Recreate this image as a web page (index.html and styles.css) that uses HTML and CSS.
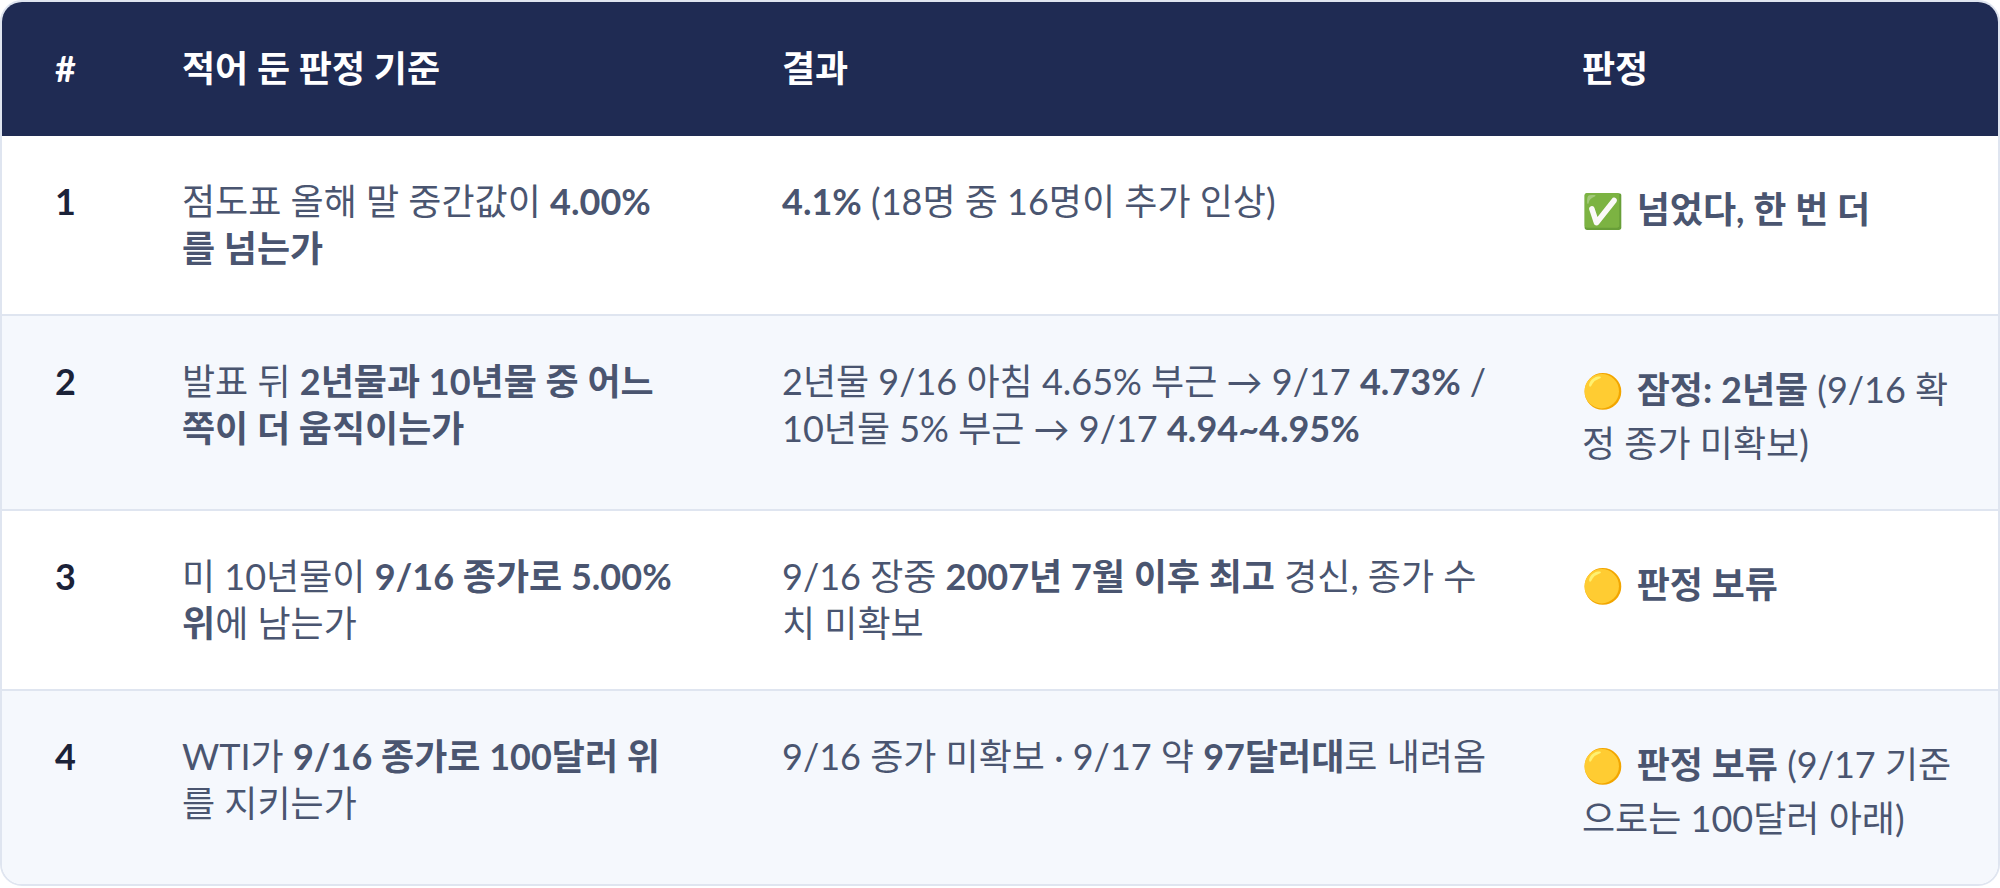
FILE: index.html
```html
<!DOCTYPE html>
<html lang="ko">
<head>
<meta charset="utf-8">
<link rel="stylesheet" href="styles.css">
</head>
<body>
<div class="wrap">
  <table class="verdict">
    <colgroup>
      <col class="c-num">
      <col class="c-crit">
      <col class="c-res">
      <col class="c-ver">
    </colgroup>
    <thead>
      <tr>
        <th class="num">#</th>
        <th class="crit">적어 둔 판정 기준</th>
        <th class="res">결과</th>
        <th class="ver">판정</th>
      </tr>
    </thead>
    <tbody>
      <tr>
        <td class="num">1</td>
        <td class="crit">점도표 올해 말 중간값이 <b>4.00%를 넘는가</b></td>
        <td class="res"><b>4.1%</b> (18명 중 16명이 추가 인상)</td>
        <td class="ver"><b><span class="emo">✅</span> 넘었다, 한 번 더</b></td>
      </tr>
      <tr class="alt">
        <td class="num">2</td>
        <td class="crit">발표 뒤 <b>2년물과 10년물 중 어느 쪽이 더 움직이는가</b></td>
        <td class="res">2년물 9/16 아침 4.65% 부근 → 9/17 <b>4.73%</b> / 10년물 5% 부근 → 9/17 <b>4.94~4.95%</b></td>
        <td class="ver"><b><span class="emo">🟡</span> 잠정: 2년물</b> (9/16 확정 종가 미확보)</td>
      </tr>
      <tr>
        <td class="num">3</td>
        <td class="crit">미 10년물이 <b>9/16 종가로 5.00% 위</b>에 남는가</td>
        <td class="res">9/16 장중 <b>2007년 7월 이후 최고</b> 경신, 종가 수치 미확보</td>
        <td class="ver"><b><span class="emo">🟡</span> 판정 보류</b></td>
      </tr>
      <tr class="alt last">
        <td class="num">4</td>
        <td class="crit">WTI가 <b>9/16 종가로 100달러 위</b>를 지키는가</td>
        <td class="res">9/16 종가 미확보 · 9/17 약 <b>97달러대</b>로 내려옴</td>
        <td class="ver"><b><span class="emo">🟡</span> 판정 보류</b> (9/17 기준으로는 100달러 아래)</td>
      </tr>
    </tbody>
  </table>
</div>
</body>
</html>
```
FILE: styles.css
```css
html, body {
  margin: 0;
  padding: 0;
  background: #ffffff;
}

.wrap {
  width: 2000px;
  box-sizing: border-box;
  border: 2px solid #dfe5f0;
  border-radius: 22px;
  overflow: hidden;
  background: #ffffff;
}

.verdict {
  width: 100%;
  table-layout: fixed;
  border-collapse: separate;
  border-spacing: 0;
  font-family: Lato, "Noto Sans CJK KR", sans-serif;
  font-size: 36px;
  line-height: 47px;
  color: #4a5570;
}

.c-num { width: 125px; }
.c-crit { width: 600px; }
.c-res { width: 800px; }

.verdict th {
  background: #1f2b53;
  color: #ffffff;
  font-weight: 700;
  text-align: left;
  padding: 43px 55px 44px;
  vertical-align: top;
}

.verdict td {
  padding: 42px 55px;
  vertical-align: top;
  border-bottom: 2px solid #dfe5f0;
}

.verdict .crit { padding-right: 52px; }
.verdict .res { padding-right: 40px; }
.verdict .ver { padding-right: 30px; }

.verdict tr.last td {
  border-bottom: none;
}

.verdict tr.alt td {
  background: #f5f8fd;
}

.verdict .num {
  padding-left: 53px;
  padding-right: 0;
}

.verdict td.num {
  color: #1b2238;
  font-weight: 700;
}

.verdict b {
  font-weight: 700;
}

.emo {
  display: inline-block;
  padding: 9px 0 6px;
  margin-right: 4px;
  font-size: 33.5px;
  font-weight: 400;
}
```
